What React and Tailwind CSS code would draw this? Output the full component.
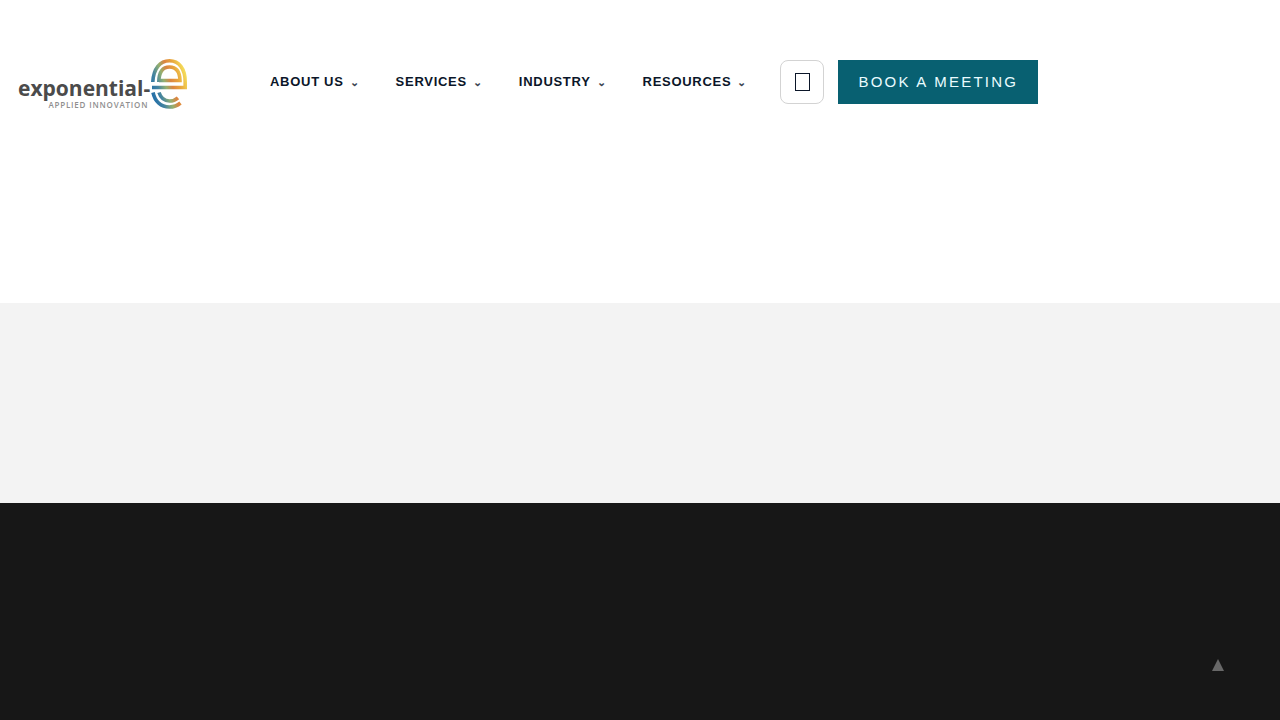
import { useId } from 'react';

const navItems = ['About us', 'Services', 'Industry', 'Resources'];

function LogoMark() {
  const id = useId();
  const paint = `url(#${id})`;

  return (
    <svg viewBox="0 0 38 52" className="w-[38px] h-[52px] shrink-0" fill="none" strokeWidth="3.6" aria-hidden="true">
      <defs>
        <linearGradient id={id} x1="1" y1="32" x2="37" y2="20" gradientUnits="userSpaceOnUse">
          <stop offset="0" stopColor="#2470a8" />
          <stop offset="0.2" stopColor="#4484a0" />
          <stop offset="0.4" stopColor="#93b070" />
          <stop offset="0.57" stopColor="#dc8440" />
          <stop offset="0.76" stopColor="#e8a53c" />
          <stop offset="1" stopColor="#f4dc5a" />
        </linearGradient>
      </defs>
      {/* outer bowl */}
      <path d="M2.800 24C3.500 10.500 10 2.800 19.500 2.800S35.200 10.500 35.200 24V29.500H2" stroke={paint} />
      {/* inner eye */}
      <path d="M8.800 24C9 14 12.800 9 19.500 9S29.800 14 30 22.500H9" stroke={paint} />
      {/* tail */}
      <path d="M3 34.500C5 43.500 11 49 19.500 49C24 49 27.500 47.500 30.500 45" stroke={paint} />
      <path d="M9 34.500C11 40.500 14 43 19.500 43C23 43 25.500 42 28 39.800" stroke={paint} />
    </svg>
  );
}

function Logo() {
  return (
    <a href="#home" aria-label="exponential-e applied innovation" className="flex w-[170px] shrink-0">
      <span className="flex flex-1 flex-col items-end pt-[18px] font-['Open_Sans',sans-serif]">
        <span className="text-[21px] leading-6 font-bold text-[#4b4b4b]">exponential-</span>
        <span className="pr-[2px] text-[8px] leading-[10px] font-semibold tracking-widest whitespace-nowrap text-[#8f8f8f]">
          APPLIED INNOVATION
        </span>
      </span>
      <LogoMark />
    </a>
  );
}

export default function App() {
  return (
    <div className="flex min-h-screen flex-col bg-white font-['Liberation_Sans',Arial,sans-serif]">
      <header className="flex h-[303px] items-start px-[18px] pt-[58px]">
        <Logo />
        <nav className="ml-[82px] flex h-12 items-center gap-[35px]">
          {navItems.map(item => (
            <a
              key={item}
              href={`#${item}`}
              className="flex items-center gap-[5px] text-[13px] font-bold tracking-[0.055em] whitespace-nowrap text-[#0b1629] uppercase"
            >
              {item}
              <span className="w-3 text-center text-[11px] text-[#3c4350]" aria-hidden="true">⌄</span>
            </a>
          ))}
        </nav>
        <div className="ml-8 flex gap-[14px] pt-[2px]">
          <button
            type="button"
            aria-label="Search"
            className="flex size-11 items-center justify-center rounded-lg border border-[#d3d3d3] text-[#0b1629]"
          >
            <span className="h-[18px] w-[15px] border border-current" />
          </button>
          <a
            href="#meeting"
            className="flex h-11 w-[200px] items-center justify-center bg-[#086071] text-[15px] tracking-[0.15em] whitespace-nowrap text-[#eafcff]"
          >
            BOOK A MEETING
          </a>
        </div>
      </header>

      <section className="h-[200px] bg-[#f3f3f3]" />

      <footer className="flex-1 bg-[#171717]" />

      {/* Back to top */}
      <button
        type="button"
        aria-label="Back to top"
        className="fixed right-[52px] bottom-[45px] flex size-5 items-center justify-center text-[#686868]"
      >
        <svg viewBox="0 0 12 12" className="size-3" fill="currentColor" aria-hidden="true">
          <path d="M6 0L12 12H0Z" />
        </svg>
      </button>
    </div>
  );
}
